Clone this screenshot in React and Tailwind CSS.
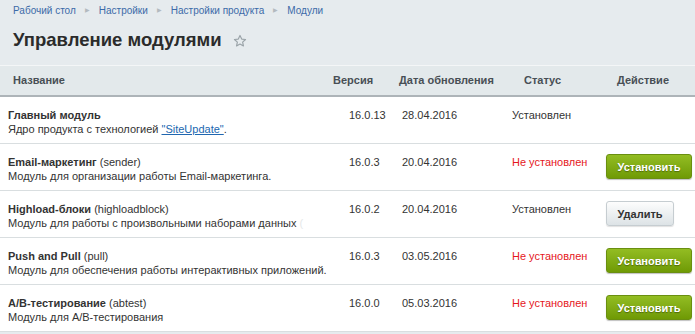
import React from 'react';

const rows = [
  {
    name: 'Главный модуль',
    desc: (
      <>
        Ядро продукта с технологией{' '}
        <a href="#" className="text-[#2067b0] underline">"SiteUpdate"</a>.
      </>
    ),
    version: '16.0.13',
    date: '28.04.2016',
    installed: true,
    action: null,
  },
  {
    name: 'Email-маркетинг',
    code: 'sender',
    desc: 'Модуль для организации работы Email-маркетинга.',
    version: '16.0.3',
    date: '20.04.2016',
    installed: false,
    action: 'install',
  },
  {
    name: 'Highload-блоки',
    code: 'highloadblock',
    desc: (
      <>
        Модуль для работы с произвольными наборами данных <span className="text-[#e6e8e9]">(</span>
      </>
    ),
    version: '16.0.2',
    date: '20.04.2016',
    installed: true,
    action: 'delete',
  },
  {
    name: 'Push and Pull',
    code: 'pull',
    desc: 'Модуль для обеспечения работы интерактивных приложений.',
    version: '16.0.3',
    date: '03.05.2016',
    installed: false,
    action: 'install',
  },
  {
    name: 'A/B-тестирование',
    code: 'abtest',
    desc: 'Модуль для A/B-тестирования',
    version: '16.0.0',
    date: '05.03.2016',
    installed: false,
    action: 'install',
  },
];

const cols = 'grid grid-cols-[330px_65px_113px_95px_1fr]';

function Crumb({ children, last }) {
  return (
    <>
      <a href="#" className="text-[#3b6aa8]">{children}</a>
      {!last && <span className="mx-[9px] text-[6px] text-[#b3babf]">▶</span>}
    </>
  );
}

export default function App() {
  return (
    <div
      className="w-[695px] h-[334px] overflow-hidden bg-[#e6ebee] text-[#333]"
      style={{ fontFamily: '"Liberation Sans", Arial, sans-serif' }}
    >
      <div className="flex items-center pl-[13px] pt-[4px] h-[17px] text-[10px]">
        <Crumb>Рабочий стол</Crumb>
        <Crumb>Настройки</Crumb>
        <Crumb>Настройки продукта</Crumb>
        <Crumb last>Модули</Crumb>
      </div>

      <div className="flex items-center pl-[13px] h-[48px] pb-[3px]">
        <h1 className="text-[18.5px] font-bold text-[#2b2b2b]">Управление модулями</h1>
        <svg className="ml-[11px] mt-[2px]" width="14" height="14" viewBox="0 0 24 24" fill="none" stroke="#9aa3a8" strokeWidth="2" strokeLinejoin="round">
          <path d="M12 2.5l2.9 6.2 6.6.7-5 4.5 1.4 6.6L12 17.2l-5.9 3.3 1.4-6.6-5-4.5 6.6-.7z" />
        </svg>
      </div>

      <div className="border-t border-[#f4f6f7]">
        <div className={`${cols} h-[31px] items-center text-[11px] font-bold text-[#484f55] bg-[#e3e9eb] border-b-2 border-[#adb4b8]`}>
          <div className="pl-[13px]">Название</div>
          <div className="pl-[3px]">Версия</div>
          <div className="pl-[4px]">Дата обновления</div>
          <div className="pl-[16px]">Статус</div>
          <div className="pl-[14px]">Действие</div>
        </div>

        {rows.map((r, i) => (
          <div key={i} className={`${cols} h-[47px] bg-white border-b border-[#d9dee0] text-[11px] leading-[14px]`}>
            <div className="pl-[8px] pt-[11px]">
              <div>
                <span className="font-bold">{r.name}</span>
                {r.code && <span> ({r.code})</span>}
              </div>
              <div>{r.desc}</div>
            </div>
            <div className="pl-[19px] pt-[11px]">{r.version}</div>
            <div className="pl-[7px] pt-[11px]">{r.date}</div>
            <div className={`pl-[4px] pt-[11px] ${r.installed ? '' : 'text-[#e5171d]'}`}>
              {r.installed ? 'Установлен' : 'Не установлен'}
            </div>
            <div className="pl-[3px] pt-[10px]">
              {r.action === 'install' && (
                <button className="w-[86px] h-[25px] rounded-[3px] border border-[#6a8f10] bg-gradient-to-b from-[#93bd22] to-[#6f9a04] text-white font-bold text-[11px] shadow-[0_1px_1px_rgba(0,0,0,0.25)] [text-shadow:0_1px_1px_rgba(0,0,0,0.35)]">
                  Установить
                </button>
              )}
              {r.action === 'delete' && (
                <button className="w-[68px] h-[25px] rounded-[3px] border border-[#c6cdd1] bg-gradient-to-b from-[#fdfdfd] to-[#dde3e6] text-[#333] font-bold text-[11px] shadow-[0_1px_1px_rgba(0,0,0,0.12)]">
                  Удалить
                </button>
              )}
            </div>
          </div>
        ))}
      </div>
    </div>
  );
}
